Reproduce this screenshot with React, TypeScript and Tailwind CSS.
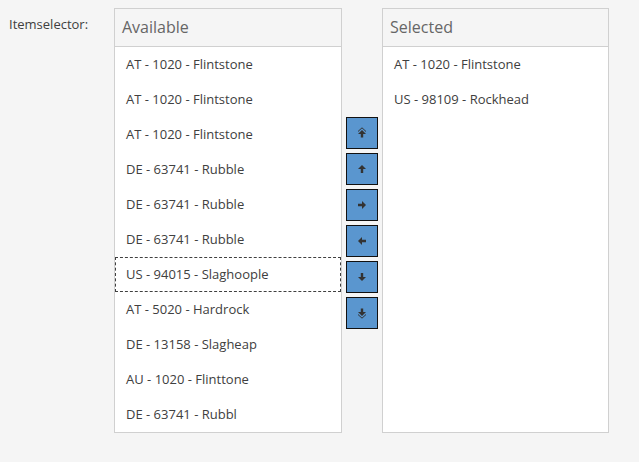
import React from "react";

const available = [
  "AT - 1020 - Flintstone",
  "AT - 1020 - Flintstone",
  "AT - 1020 - Flintstone",
  "DE - 63741 - Rubble",
  "DE - 63741 - Rubble",
  "DE - 63741 - Rubble",
  "US - 94015 - Slaghoople",
  "AT - 5020 - Hardrock",
  "DE - 13158 - Slagheap",
  "AU - 1020 - Flinttone",
  "DE - 63741 - Rubbl",
];

const selected = ["AT - 1020 - Flintstone", "US - 98109 - Rockhead"];

type Dir = "top" | "up" | "right" | "left" | "down" | "bottom";

const Arrow: React.FC<{ dir: Dir }> = ({ dir }) => {
  // base shape points up, rotated for other directions
  const rot =
    dir === "right" ? 90 : dir === "left" ? -90 : dir === "down" || dir === "bottom" ? 180 : 0;
  const dbl = dir === "top" || dir === "bottom";
  return (
    <svg width="12" height="12" viewBox="0 0 12 12">
      <g transform={`rotate(${rot} 6 6)`} fill="#333">
        {dbl && (
          <path d="M2 4.5 L6 0.8 L10 4.5" fill="none" stroke="#333" strokeWidth="1" />
        )}
        <path
          d={
            dbl
              ? "M6 3 L10 7 L7.2 7 L7.2 10.5 L4.8 10.5 L4.8 7 L2 7 Z"
              : "M6 2 L10 6 L7.2 6 L7.2 10 L4.8 10 L4.8 6 L2 6 Z"
          }
        />
      </g>
    </svg>
  );
};

const Panel: React.FC<{ title: string; items: string[]; focus?: number; width: string }> = ({
  title,
  items,
  focus,
  width,
}) => (
  <div className={`${width} h-[425px] border border-[#d0d0d0] bg-white flex flex-col`}>
    <div className="h-[38px] shrink-0 bg-[#f5f5f5] border-b border-[#d0d0d0] px-[7px] pb-[1px] flex items-center text-[16px] text-[#666]">
      {title}
    </div>
    <div className="flex flex-col">
      {items.map((t, i) => (
        <div
          key={i}
          className={`h-[35px] flex items-center text-[13px] text-[#404040] ${
            i === focus ? "border border-dashed border-[#404040] px-[10px]" : "px-[11px]"
          }`}
        >
          {t}
        </div>
      ))}
    </div>
  </div>
);

export default function App() {
  const dirs: Dir[] = ["top", "up", "right", "left", "down", "bottom"];
  return (
    <div
      className="w-[639px] h-[462px] bg-[#f5f5f5] flex pt-[8px] pl-[9px]"
      style={{ fontFamily: '"Open Sans", sans-serif' }}
    >
      <div className="w-[105px] text-[13px] text-[#404040] pt-[7px]">Itemselector:</div>
      <Panel title="Available" items={available} focus={6} width="w-[228px]" />
      <div className="w-[40px] flex flex-col items-center gap-[4px] pt-[109px]">
        {dirs.map((d) => (
          <div
            key={d}
            className="w-[32px] h-[32px] bg-[#5a96cf] border border-[#111] flex items-center justify-center"
          >
            <Arrow dir={d} />
          </div>
        ))}
      </div>
      <Panel title="Selected" items={selected} width="w-[227px]" />
    </div>
  );
}
